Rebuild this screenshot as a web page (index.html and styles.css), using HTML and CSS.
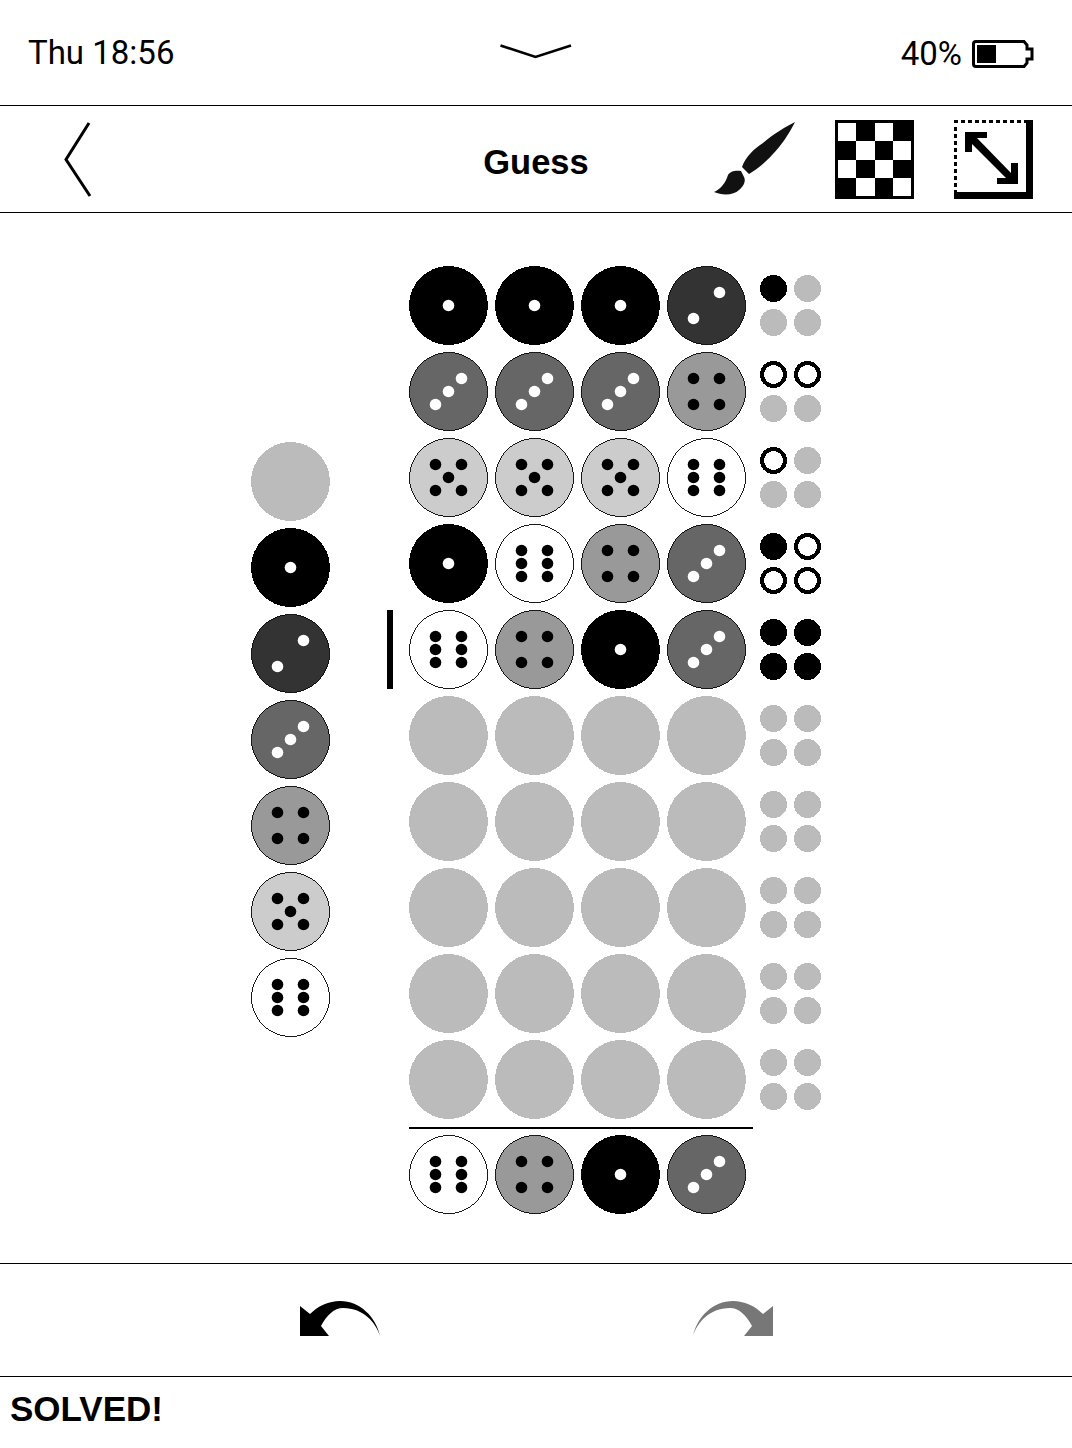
FILE: index.html
```html
<!DOCTYPE html>
<html>
<head>
    <title>Guess</title>
    <meta charset="utf-8">
    <link rel="stylesheet" href="styles.css">
</head>
<body>

    <!-- peg faces, reused everywhere below -->
    <svg class="defs" width="0" height="0">
        <symbol id="p0" viewBox="0 0 79 79"><circle cx="39.5" cy="39.5" r="39.5" fill="#bbb"/></symbol>
        <symbol id="p1" viewBox="0 0 79 79">
            <circle cx="39.5" cy="39.5" r="39.5" fill="#000"/>
            <g class="pips" fill="#fff">
                <circle cx="39.5" cy="39.5" r="5.8"/>
            </g>
        </symbol>
        <symbol id="p2" viewBox="0 0 79 79">
            <circle cx="39.5" cy="39.5" r="39" fill="#333" stroke="#000" stroke-width="0.9"/>
            <g class="pips" fill="#fff">
                <circle cx="52.5" cy="26.5" r="5.8"/>
                <circle cx="26.5" cy="52.5" r="5.8"/>
            </g>
        </symbol>
        <symbol id="p3" viewBox="0 0 79 79">
            <circle cx="39.5" cy="39.5" r="39" fill="#666" stroke="#000" stroke-width="0.9"/>
            <g class="pips" fill="#fff">
                <circle cx="52.5" cy="26.5" r="5.8"/>
                <circle cx="39.5" cy="39.5" r="5.8"/>
                <circle cx="26.5" cy="52.5" r="5.8"/>
            </g>
        </symbol>
        <symbol id="p4" viewBox="0 0 79 79">
            <circle cx="39.5" cy="39.5" r="39" fill="#999" stroke="#000" stroke-width="0.9"/>
            <g class="pips">
                <circle cx="26.5" cy="26.5" r="5.8"/>
                <circle cx="52.5" cy="26.5" r="5.8"/>
                <circle cx="26.5" cy="52.5" r="5.8"/>
                <circle cx="52.5" cy="52.5" r="5.8"/>
            </g>
        </symbol>
        <symbol id="p5" viewBox="0 0 79 79">
            <circle cx="39.5" cy="39.5" r="39" fill="#ccc" stroke="#000" stroke-width="0.9"/>
            <g class="pips">
                <circle cx="26.5" cy="26.5" r="5.8"/>
                <circle cx="52.5" cy="26.5" r="5.8"/>
                <circle cx="39.5" cy="39.5" r="5.8"/>
                <circle cx="26.5" cy="52.5" r="5.8"/>
                <circle cx="52.5" cy="52.5" r="5.8"/>
            </g>
        </symbol>
        <symbol id="p6" viewBox="0 0 79 79">
            <circle cx="39.5" cy="39.5" r="39" fill="#fff" stroke="#000" stroke-width="0.9"/>
            <g class="pips">
                <circle cx="26.5" cy="26.5" r="5.8"/>
                <circle cx="52.5" cy="26.5" r="5.8"/>
                <circle cx="26.5" cy="39.5" r="5.8"/>
                <circle cx="52.5" cy="39.5" r="5.8"/>
                <circle cx="26.5" cy="52.5" r="5.8"/>
                <circle cx="52.5" cy="52.5" r="5.8"/>
            </g>
        </symbol>
        <symbol id="f0" viewBox="0 0 27 27"><circle cx="13.5" cy="13.5" r="13.5" fill="#bbb"/></symbol>
        <symbol id="f1" viewBox="0 0 27 27"><circle cx="13.5" cy="13.5" r="13.5" fill="#000"/></symbol>
        <symbol id="f2" viewBox="0 0 27 27"><circle cx="13.5" cy="13.5" r="11.5" fill="#fff" stroke="#000" stroke-width="4"/></symbol>
    </svg>

    <div class="status-bar">
        <span class="clock">Thu 18:56</span>
        <svg class="chevron" width="72" height="16" viewBox="0 0 72 16"><polyline points="0.5,1.5 35.5,13 71,1.5" fill="none" stroke="#000" stroke-width="2.6"/></svg>
        <div class="battery">
            <span>40%</span>
            <svg width="62" height="28" viewBox="0 0 62 28">
                <path d="M4 1.5H52L55 5V9H60V19H55V23L52 26.5H4Q1.5 26.5 1.5 24V4Q1.5 1.5 4 1.5Z" fill="none" stroke="#000" stroke-width="3"/>
                <rect x="5" y="5" width="19" height="18"/>
            </svg>
        </div>
    </div>

    <div class="tool-bar">
        <svg class="back" width="30" height="76" viewBox="0 0 30 76"><polyline points="26,1 3,37.5 27,74" fill="none" stroke="#000" stroke-width="3"/></svg>
        <h1 class="title">Guess</h1>
        <div class="tools">
            <svg width="82" height="79" viewBox="712 120 82 79">
                <path d="M794 122C786 126 772 134 762 143C753 149 745 156 741 167L748 174C755 170 765 162 771 155C780 146 788 134 794 122Z" fill="#111"/>
                <path d="M740 171C735 170 729 171 727 175C725 182 720 189 713 192C722 196 733 195 738 190C743 186 745 181 743 177Z" fill="#111"/>
            </svg>
            <svg width="79" height="79" viewBox="0 0 79 79">
                <rect width="79" height="79"/>
                <g fill="#fff">
                    <rect x="3" y="3" width="18" height="18"/>
                    <rect x="40" y="3" width="18" height="18"/>
                    <rect x="21" y="21" width="19" height="19"/>
                    <rect x="58" y="21" width="18" height="19"/>
                    <rect x="3" y="40" width="18" height="18"/>
                    <rect x="40" y="40" width="18" height="18"/>
                    <rect x="21" y="58" width="19" height="18"/>
                    <rect x="58" y="58" width="18" height="18"/>
                </g>
            </svg>
            <svg width="79" height="79" viewBox="0 0 79 79">
                <path d="M1.5 7V72" fill="none" stroke="#000" stroke-width="3" stroke-dasharray="4 3"/>
                <path d="M0 1.5H72" fill="none" stroke="#000" stroke-width="3" stroke-dasharray="4 3"/>
                <path d="M72 0H79V79H0V72H72Z"/>
                <path d="M11 12H33V18H23L57 53V43H64V64H43V58H52L18 24V32H11Z"/>
            </svg>
        </div>
    </div>

    <div class="game">
        <div class="palette">
            <svg class="peg"><use href="#p0"/></svg>
            <svg class="peg"><use href="#p1"/></svg>
            <svg class="peg"><use href="#p2"/></svg>
            <svg class="peg"><use href="#p3"/></svg>
            <svg class="peg"><use href="#p4"/></svg>
            <svg class="peg"><use href="#p5"/></svg>
            <svg class="peg"><use href="#p6"/></svg>
        </div>

        <div class="board">
            <div class="row">
                <svg class="peg"><use href="#p1"/></svg><svg class="peg"><use href="#p1"/></svg><svg class="peg"><use href="#p1"/></svg><svg class="peg"><use href="#p2"/></svg>
                <div class="hints"><svg class="hint"><use href="#f1"/></svg><svg class="hint"><use href="#f0"/></svg><svg class="hint"><use href="#f0"/></svg><svg class="hint"><use href="#f0"/></svg></div>
            </div>
            <div class="row">
                <svg class="peg"><use href="#p3"/></svg><svg class="peg"><use href="#p3"/></svg><svg class="peg"><use href="#p3"/></svg><svg class="peg"><use href="#p4"/></svg>
                <div class="hints"><svg class="hint"><use href="#f2"/></svg><svg class="hint"><use href="#f2"/></svg><svg class="hint"><use href="#f0"/></svg><svg class="hint"><use href="#f0"/></svg></div>
            </div>
            <div class="row">
                <svg class="peg"><use href="#p5"/></svg><svg class="peg"><use href="#p5"/></svg><svg class="peg"><use href="#p5"/></svg><svg class="peg"><use href="#p6"/></svg>
                <div class="hints"><svg class="hint"><use href="#f2"/></svg><svg class="hint"><use href="#f0"/></svg><svg class="hint"><use href="#f0"/></svg><svg class="hint"><use href="#f0"/></svg></div>
            </div>
            <div class="row">
                <svg class="peg"><use href="#p1"/></svg><svg class="peg"><use href="#p6"/></svg><svg class="peg"><use href="#p4"/></svg><svg class="peg"><use href="#p3"/></svg>
                <div class="hints"><svg class="hint"><use href="#f1"/></svg><svg class="hint"><use href="#f2"/></svg><svg class="hint"><use href="#f2"/></svg><svg class="hint"><use href="#f2"/></svg></div>
            </div>
            <div class="row current">
                <svg class="peg"><use href="#p6"/></svg><svg class="peg"><use href="#p4"/></svg><svg class="peg"><use href="#p1"/></svg><svg class="peg"><use href="#p3"/></svg>
                <div class="hints"><svg class="hint"><use href="#f1"/></svg><svg class="hint"><use href="#f1"/></svg><svg class="hint"><use href="#f1"/></svg><svg class="hint"><use href="#f1"/></svg></div>
            </div>
            <div class="row">
                <svg class="peg"><use href="#p0"/></svg><svg class="peg"><use href="#p0"/></svg><svg class="peg"><use href="#p0"/></svg><svg class="peg"><use href="#p0"/></svg>
                <div class="hints"><svg class="hint"><use href="#f0"/></svg><svg class="hint"><use href="#f0"/></svg><svg class="hint"><use href="#f0"/></svg><svg class="hint"><use href="#f0"/></svg></div>
            </div>
            <div class="row">
                <svg class="peg"><use href="#p0"/></svg><svg class="peg"><use href="#p0"/></svg><svg class="peg"><use href="#p0"/></svg><svg class="peg"><use href="#p0"/></svg>
                <div class="hints"><svg class="hint"><use href="#f0"/></svg><svg class="hint"><use href="#f0"/></svg><svg class="hint"><use href="#f0"/></svg><svg class="hint"><use href="#f0"/></svg></div>
            </div>
            <div class="row">
                <svg class="peg"><use href="#p0"/></svg><svg class="peg"><use href="#p0"/></svg><svg class="peg"><use href="#p0"/></svg><svg class="peg"><use href="#p0"/></svg>
                <div class="hints"><svg class="hint"><use href="#f0"/></svg><svg class="hint"><use href="#f0"/></svg><svg class="hint"><use href="#f0"/></svg><svg class="hint"><use href="#f0"/></svg></div>
            </div>
            <div class="row">
                <svg class="peg"><use href="#p0"/></svg><svg class="peg"><use href="#p0"/></svg><svg class="peg"><use href="#p0"/></svg><svg class="peg"><use href="#p0"/></svg>
                <div class="hints"><svg class="hint"><use href="#f0"/></svg><svg class="hint"><use href="#f0"/></svg><svg class="hint"><use href="#f0"/></svg><svg class="hint"><use href="#f0"/></svg></div>
            </div>
            <div class="row">
                <svg class="peg"><use href="#p0"/></svg><svg class="peg"><use href="#p0"/></svg><svg class="peg"><use href="#p0"/></svg><svg class="peg"><use href="#p0"/></svg>
                <div class="hints"><svg class="hint"><use href="#f0"/></svg><svg class="hint"><use href="#f0"/></svg><svg class="hint"><use href="#f0"/></svg><svg class="hint"><use href="#f0"/></svg></div>
            </div>
            <div class="divider"></div>
            <div class="row">
                <svg class="peg"><use href="#p6"/></svg><svg class="peg"><use href="#p4"/></svg><svg class="peg"><use href="#p1"/></svg><svg class="peg"><use href="#p3"/></svg>
            </div>
        </div>
    </div>

    <div class="undo-bar">
        <svg width="80" height="35" viewBox="0 0 80 35"><path class="arrow" d="M0 5L10 13C18 5 29 0 40 0C60 0 76 16 80 35C76 22 64 7 43 7C34 7 27 14 21 25L29 35H0Z"/></svg>
        <svg class="redo" width="80" height="35" viewBox="0 0 80 35"><path class="arrow" d="M0 5L10 13C18 5 29 0 40 0C60 0 76 16 80 35C76 22 64 7 43 7C34 7 27 14 21 25L29 35H0Z"/></svg>
    </div>

    <div class="message">SOLVED!</div>

</body>
</html>
```

FILE: styles.css
```css
html, body {
    height: 100%;
}

body {
    background-color: #ffffff;
    color: #000000;
    margin: 0;
    font-family: "Liberation Sans", Arial, sans-serif;
    overflow: hidden;
}

.defs {
    display: block;
    height: 0;
}

svg {
    display: block;
    flex: none;
}

/* top status line */
.status-bar {
    height: 105px;
    border-bottom: 1px solid #000;
    display: grid;
    grid-template-columns: 1fr auto 1fr;
    align-items: center;
    padding: 0 29px;
    font-family: Roboto, sans-serif;
    font-size: 33px;
}

.clock {
    margin-left: -1px;
}

.chevron {
    position: relative;
    top: -1px;
}

.battery {
    justify-self: end;
    display: flex;
    align-items: center;
    gap: 10px;
    margin-right: 9px;
    position: relative;
    top: 1px;
}

/* title row */
.tool-bar {
    height: 106px;
    border-bottom: 1px solid #000;
    display: grid;
    grid-template-columns: 1fr auto 1fr;
    align-items: center;
    padding: 0 39px;
}

.back {
    margin: 2px 0 0 24px;
}

.title {
    margin: 6px 0 0;
    font-size: 34.5px;
    font-weight: bold;
}

.tools {
    justify-self: end;
    display: flex;
    gap: 40px;
}

.game {
    height: 1050px;
    box-sizing: border-box;
    padding: 53px 0 0 251px;
    display: flex;
    gap: 79px;
}

.palette {
    margin-top: 176px;
    display: flex;
    flex-direction: column;
    gap: 7px;
}

.peg {
    width: 79px;
    height: 79px;
    shape-rendering: crispEdges;
}

/* the dots stay round, crisp edges make them square at this size */
.pips {
    shape-rendering: geometricPrecision;
}

.board {
    display: flex;
    flex-direction: column;
    gap: 7px;
}

.row {
    display: flex;
    align-items: center;
    gap: 7px;
    position: relative;
}

/* bar in front of the row being played */
.row.current::before {
    content: "";
    position: absolute;
    left: -22px;
    top: 0;
    width: 6px;
    height: 79px;
    background: #000;
}

.hints {
    margin-left: 7px;
    display: grid;
    grid-template-columns: 27px 27px;
    gap: 7px;
}

.hint {
    width: 27px;
    height: 27px;
    shape-rendering: crispEdges;
}

.divider {
    width: 344px;
    height: 2px;
    background: #000;
    margin: 1px 0 -1px;
}

.undo-bar {
    box-sizing: border-box;
    border-top: 1px solid #000;
    border-bottom: 1px solid #000;
    height: 114px;
    padding: 37px 0 0 300px;
    display: flex;
    gap: 313px;
}

.arrow {
    fill: #000;
}

.redo {
    transform: scaleX(-1);
}

.redo .arrow {
    fill: #777;
}

.message {
    padding: 12px 0 0 10px;
    font-size: 35px;
    font-weight: bold;
}
```
